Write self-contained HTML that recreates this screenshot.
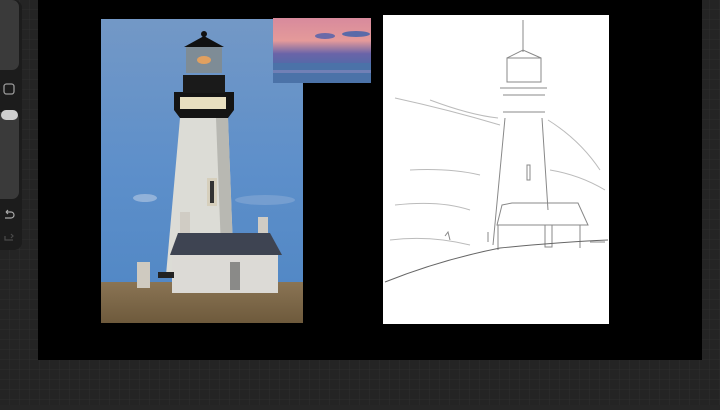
<!DOCTYPE html><html><head><style>body{margin:0;width:720px;height:405px;overflow:hidden;background:#262626;}</style></head><body>
<svg width="720" height="405" viewBox="0 0 720 405" xmlns="http://www.w3.org/2000/svg">
<defs>
<pattern id="g" width="10" height="10" patternUnits="userSpaceOnUse"><path d="M10 0V10H0" fill="none" stroke="#2e2e2e" stroke-width="1"/></pattern>
<linearGradient id="sky" x1="0" y1="0" x2="0" y2="1"><stop offset="0" stop-color="#7398c6"/><stop offset=".5" stop-color="#5d8fca"/><stop offset="1" stop-color="#4f86c4"/></linearGradient>
<linearGradient id="sun" x1="0" y1="0" x2="0" y2="1"><stop offset="0" stop-color="#d88a9c"/><stop offset=".35" stop-color="#e49a9a"/><stop offset=".55" stop-color="#6a64a8"/><stop offset=".75" stop-color="#4f6aa8"/><stop offset="1" stop-color="#6a7fb8"/></linearGradient>
<linearGradient id="grass" x1="0" y1="0" x2="0" y2="1"><stop offset="0" stop-color="#8a7454"/><stop offset="1" stop-color="#6e5a3c"/></linearGradient>
</defs>
<rect width="720" height="405" fill="#242424"/><rect width="720" height="405" fill="url(#g)"/>
<rect x="-10" y="0" width="32" height="250" rx="8" fill="#1c1c1c"/>
<rect x="-10" y="0" width="29" height="70" rx="7" fill="#3a3a3a"/>
<rect x="4" y="84" width="10" height="10" rx="2.5" fill="none" stroke="#9a9a9a" stroke-width="1.3"/>
<rect x="-10" y="112" width="29" height="87" rx="7" fill="#3a3a3a"/>
<rect x="1" y="110" width="17" height="10" rx="5" fill="#cfcfcf"/>
<path d="M6 212 h5 a2.5 2.5 0 0 1 0 6 h-6 M6 212 l2 -2 M6 212 l2 2" fill="none" stroke="#aaa" stroke-width="1.2"/>
<path d="M5 236 v4 h8 M11 234 l2 2 -2 2" fill="none" stroke="#4a4a4a" stroke-width="1.2"/>
<rect x="38" y="0" width="664" height="360" fill="#000"/>
<rect x="101" y="19" width="202" height="304" fill="url(#sky)"/>
<ellipse cx="145" cy="198" rx="12" ry="4" fill="#a9c2e0" opacity=".7"/>
<ellipse cx="265" cy="200" rx="30" ry="5" fill="#8fb0d8" opacity=".5"/>
<rect x="101" y="282" width="202" height="41" fill="url(#grass)"/>
<path d="M180 118 L228 118 L234 275 L166 275 Z" fill="#dcdcd6"/>
<path d="M216 118 L228 118 L234 275 L222 275 Z" fill="#b8b8b2"/>
<rect x="207" y="178" width="10" height="28" fill="#d6cfbc"/><rect x="210" y="181" width="4" height="22" fill="#333"/>
<path d="M174 92 H234 V110 L228 118 H180 L174 110Z" fill="#141414"/>
<rect x="180" y="97" width="46" height="12" fill="#e8dfc0"/>
<rect x="183" y="75" width="42" height="18" fill="#1a1a1a"/>
<rect x="186" y="47" width="36" height="26" fill="#7e8c96"/>
<ellipse cx="204" cy="60" rx="7" ry="4" fill="#e0a060"/>
<path d="M184 47 L204 36 L224 47Z" fill="#111"/><circle cx="204" cy="34" r="3" fill="#111"/>
<rect x="180" y="212" width="10" height="25" fill="#d0ccc4"/><rect x="258" y="217" width="10" height="22" fill="#d0ccc4"/>
<path d="M178 233 H270 L282 255 H170Z" fill="#3e4452"/>
<rect x="172" y="255" width="106" height="38" fill="#dcdad6"/>
<rect x="230" y="262" width="10" height="28" fill="#8a8a88"/>
<rect x="137" y="262" width="13" height="26" fill="#cfcac0"/>
<rect x="158" y="272" width="16" height="6" fill="#222"/>
<rect x="273" y="18" width="98" height="65" fill="url(#sun)"/>
<ellipse cx="325" cy="36" rx="10" ry="3" fill="#6a6aa8"/><ellipse cx="356" cy="34" rx="14" ry="3" fill="#5a6aa8"/>
<rect x="273" y="63" width="98" height="20" fill="#4b72a8"/>
<rect x="273" y="70" width="98" height="3" fill="#8a8ac0" opacity=".6"/>
<rect x="383" y="15" width="226" height="309" fill="#fff"/>
<g fill="none" stroke="#888" stroke-width="1">
<path d="M523 20 V52 M507 58 L523 50 L541 58 M507 58 H541 V82 H507Z M500 88 H547 M503 95 H545 M503 112 H545 M505 118 L493 245 M542 118 L548 210"/>
<path d="M527 165 v15 h3 v-15z"/>
<path d="M502 205 L512 203 H578 L588 225 H497Z M498 225 V250 M580 225 V248 M545 225 v22 h7 v-22z"/>
<path d="M385 282 Q440 260 500 248 Q560 242 608 240" stroke="#666"/>
<path d="M395 98 Q450 110 500 125 M430 100 Q470 115 498 118" stroke="#bbb"/>
<path d="M548 120 Q580 140 600 170 M550 170 Q580 175 605 190" stroke="#bbb"/>
<path d="M395 205 Q440 200 470 210 M410 170 Q450 168 480 175 M390 240 Q430 235 470 245" stroke="#bbb"/>
<path d="M445 236 l3 -4 l2 8 M488 232 v10 M590 242 h15"/>
</g>
</svg>
</body></html>
